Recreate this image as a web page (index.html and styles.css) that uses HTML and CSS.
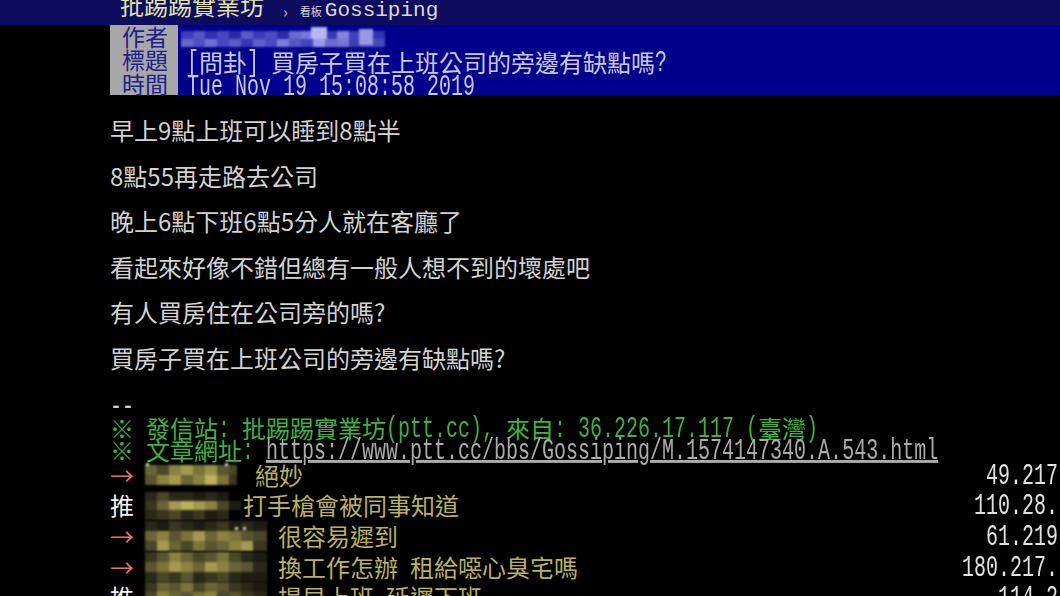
FILE: index.html
```html
<!DOCTYPE html>
<html lang="zh-Hant">
<head>
<meta charset="utf-8">
<title>[問卦] 買房子買在上班公司的旁邊有缺點嗎?</title>
<link rel="stylesheet" href="styles.css">
</head>
<body>
<header class="topbar">
  <span class="brand">批踢踢實業坊</span>
  <span class="crumb-sep">›</span>
  <span class="board-label">看板</span>
  <span class="board-name">Gossiping</span>
</header>

<section class="meta">
  <div class="meta-labels">
    <div class="meta-row">作者</div>
    <div class="meta-row">標題</div>
    <div class="meta-row">時間</div>
  </div>
  <div class="meta-values">
    <div class="meta-row">
      <svg class="author-mosaic" width="210" height="20" viewBox="0 0 210 20" aria-hidden="true">
        <rect x="0" y="4" width="12" height="8" fill="#3c3cbc"/><rect x="12" y="4" width="12" height="8" fill="#5454c4"/><rect x="24" y="4" width="12" height="8" fill="#3030b0"/><rect x="36" y="4" width="12" height="8" fill="#4848c0"/><rect x="48" y="4" width="12" height="8" fill="#2a2aa8"/><rect x="60" y="4" width="12" height="8" fill="#5a5ac8"/><rect x="72" y="4" width="12" height="8" fill="#3a3ab8"/><rect x="84" y="4" width="12" height="8" fill="#4c4cc0"/><rect x="96" y="4" width="12" height="8" fill="#2c2caa"/><rect x="108" y="4" width="12" height="8" fill="#6a6ad0"/><rect x="120" y="4" width="12" height="8" fill="#7878d8"/><rect x="132" y="4" width="12" height="8" fill="#a8a8ee"/><rect x="144" y="4" width="12" height="8" fill="#3a3ab4"/><rect x="156" y="4" width="12" height="8" fill="#8484dc"/><rect x="168" y="4" width="12" height="8" fill="#4040ba"/><rect x="180" y="4" width="12" height="8" fill="#6464cc"/><rect x="192" y="4" width="12" height="8" fill="#3434b0"/>
        <rect x="0" y="12" width="12" height="8" fill="#6868cc"/><rect x="12" y="12" width="12" height="8" fill="#5050c2"/><rect x="24" y="12" width="12" height="8" fill="#7070d4"/><rect x="36" y="12" width="12" height="8" fill="#4646be"/><rect x="48" y="12" width="12" height="8" fill="#5c5cc8"/><rect x="60" y="12" width="12" height="8" fill="#3636b4"/><rect x="72" y="12" width="12" height="8" fill="#6060ca"/><rect x="84" y="12" width="12" height="8" fill="#4a4ac0"/><rect x="96" y="12" width="12" height="8" fill="#7c7cd8"/><rect x="108" y="12" width="12" height="8" fill="#5656c6"/><rect x="120" y="12" width="12" height="8" fill="#4444bc"/><rect x="132" y="12" width="12" height="8" fill="#9a9ae6"/><rect x="144" y="12" width="12" height="8" fill="#6c6cd0"/><rect x="156" y="12" width="12" height="8" fill="#7676d6"/><rect x="168" y="12" width="12" height="8" fill="#3e3eb8"/><rect x="180" y="12" width="12" height="8" fill="#5252c4"/><rect x="192" y="12" width="12" height="8" fill="#4848bc"/>
        <rect x="130" y="0" width="16" height="12" fill="#b8b8f2"/><rect x="178" y="2" width="14" height="16" fill="#9898e0"/>
      </svg>
    </div>
    <div class="meta-row"><span class="m">[</span>問卦<span class="m">] </span>買房子買在上班公司的旁邊有缺點嗎<span class="m">?</span></div>
    <div class="meta-row"><span class="m">Tue Nov 19 15:08:58 2019</span></div>
  </div>
</section>

<main class="content">
  <p class="line">早上9點上班可以睡到8點半</p>
  <p class="line">8點55再走路去公司</p>
  <p class="line">晚上6點下班6點5分人就在客廳了</p>
  <p class="line">看起來好像不錯但總有一般人想不到的壞處吧</p>
  <p class="line">有人買房住在公司旁的嗎?</p>
  <p class="line">買房子買在上班公司的旁邊有缺點嗎?</p>
</main>

<section class="sig">
  <div class="sig-line"><span class="m">--</span></div>
  <div class="sig-line green">※<span class="m"> </span>發信站<span class="m">: </span>批踢踢實業坊<span class="m">(ptt.cc), </span>來自<span class="m">: 36.226.17.117 (</span>臺灣<span class="m">)</span></div>
  <div class="sig-line green">※<span class="m"> </span>文章網址<span class="m">: </span><span class="m url">https://www.ptt.cc/bbs/Gossiping/M.1574147340.A.543.html</span></div>
</section>

<section class="pushes">
  <div class="push">
    <span class="tag arrow">→</span>
    <span class="uid uid-a">
      <svg width="92" height="30" viewBox="0 0 92 30" aria-hidden="true">
        <rect x="0" y="5" width="12" height="10" fill="#6a6535"/><rect x="12" y="5" width="12" height="10" fill="#4a4628"/><rect x="24" y="5" width="12" height="10" fill="#8a8340"/><rect x="36" y="5" width="12" height="10" fill="#a39a50"/><rect x="48" y="5" width="12" height="10" fill="#7a7438"/><rect x="60" y="5" width="12" height="10" fill="#9a9248"/><rect x="72" y="5" width="12" height="10" fill="#5a5530"/><rect x="84" y="5" width="8" height="10" fill="#4a4628"/>
        <rect x="0" y="15" width="12" height="10" fill="#5a5530"/><rect x="12" y="15" width="12" height="10" fill="#8a8340"/><rect x="24" y="15" width="12" height="10" fill="#a39a50"/><rect x="36" y="15" width="12" height="10" fill="#6a6535"/><rect x="48" y="15" width="12" height="10" fill="#8a8340"/><rect x="60" y="15" width="12" height="10" fill="#bcb25c"/><rect x="72" y="15" width="12" height="10" fill="#7a7438"/><rect x="84" y="15" width="8" height="10" fill="#3a3620"/>
        <rect x="1" y="3" width="3" height="3" fill="#d8d8c8"/><rect x="80" y="3" width="3" height="3" fill="#d8d8c8"/>
      </svg>
    </span>
    <span class="push-text">絕妙</span>
    <span class="ip"><span class="m">49.217</span></span>
  </div>
  <div class="push">
    <span class="tag tui">推</span>
    <span class="uid uid-b">
      <svg width="96" height="30" viewBox="0 0 96 30" aria-hidden="true">
        <rect x="0" y="2" width="12" height="9" fill="#2a2818"/><rect x="12" y="2" width="12" height="9" fill="#4a4628"/><rect x="24" y="2" width="12" height="9" fill="#2a2818"/><rect x="36" y="2" width="12" height="9" fill="#2a2818"/><rect x="48" y="2" width="12" height="9" fill="#1e1c12"/><rect x="60" y="2" width="12" height="9" fill="#2a2818"/><rect x="72" y="2" width="12" height="9" fill="#1e1c12"/>
        <rect x="0" y="11" width="12" height="9" fill="#3a3620"/><rect x="12" y="11" width="12" height="9" fill="#6a6535"/><rect x="24" y="11" width="12" height="9" fill="#a39a50"/><rect x="36" y="11" width="12" height="9" fill="#bcb25c"/><rect x="48" y="11" width="12" height="9" fill="#a39a50"/><rect x="60" y="11" width="12" height="9" fill="#8a8340"/><rect x="72" y="11" width="12" height="9" fill="#4a4628"/><rect x="84" y="11" width="12" height="9" fill="#1e1c12"/>
        <rect x="0" y="20" width="12" height="10" fill="#2a2818"/><rect x="12" y="20" width="12" height="10" fill="#3a3620"/><rect x="24" y="20" width="12" height="10" fill="#4a4628"/><rect x="36" y="20" width="12" height="10" fill="#2a2818"/><rect x="48" y="20" width="12" height="10" fill="#3a3620"/><rect x="60" y="20" width="12" height="10" fill="#1e1c12"/><rect x="72" y="20" width="12" height="10" fill="#2a2818"/>
      </svg>
    </span>
    <span class="push-text">打手槍會被同事知道</span>
    <span class="ip"><span class="m">110.28.</span></span>
  </div>
  <div class="push">
    <span class="tag arrow">→</span>
    <span class="uid uid-c">
      <svg width="122" height="30" viewBox="0 0 122 30" aria-hidden="true">
        <rect x="0" y="0" width="12" height="10" fill="#2a2818"/><rect x="12" y="0" width="12" height="10" fill="#1e1c12"/><rect x="24" y="0" width="12" height="10" fill="#3a3620"/><rect x="36" y="0" width="12" height="10" fill="#2a2818"/><rect x="48" y="0" width="12" height="10" fill="#1e1c12"/><rect x="60" y="0" width="12" height="10" fill="#2a2818"/><rect x="72" y="0" width="12" height="10" fill="#3a3620"/><rect x="84" y="0" width="12" height="10" fill="#1e1c12"/><rect x="96" y="0" width="12" height="10" fill="#2a2818"/><rect x="108" y="0" width="14" height="10" fill="#1e1c12"/>
        <rect x="0" y="10" width="12" height="10" fill="#6a6535"/><rect x="12" y="10" width="12" height="10" fill="#8a8340"/><rect x="24" y="10" width="12" height="10" fill="#5a5530"/><rect x="36" y="10" width="12" height="10" fill="#7a7438"/><rect x="48" y="10" width="12" height="10" fill="#a39a50"/><rect x="60" y="10" width="12" height="10" fill="#6a6535"/><rect x="72" y="10" width="12" height="10" fill="#8a8340"/><rect x="84" y="10" width="12" height="10" fill="#7a7438"/><rect x="96" y="10" width="12" height="10" fill="#5a5530"/><rect x="108" y="10" width="14" height="10" fill="#4a4628"/>
        <rect x="0" y="20" width="12" height="10" fill="#4a4628"/><rect x="12" y="20" width="12" height="10" fill="#a39a50"/><rect x="24" y="20" width="12" height="10" fill="#6a6535"/><rect x="36" y="20" width="12" height="10" fill="#4a4628"/><rect x="48" y="20" width="12" height="10" fill="#7a7438"/><rect x="60" y="20" width="12" height="10" fill="#5a5530"/><rect x="72" y="20" width="12" height="10" fill="#6a6535"/><rect x="84" y="20" width="12" height="10" fill="#8a8340"/><rect x="96" y="20" width="12" height="10" fill="#a39a50"/><rect x="108" y="20" width="14" height="10" fill="#3a3620"/>
        <rect x="90" y="6" width="3" height="3" fill="#d8d8c8"/><rect x="98" y="6" width="3" height="3" fill="#d8d8c8"/>
      </svg>
    </span>
    <span class="push-text">很容易遲到</span>
    <span class="ip"><span class="m">61.219</span></span>
  </div>
  <div class="push">
    <span class="tag arrow">→</span>
    <span class="uid uid-c">
      <svg width="122" height="30" viewBox="0 0 122 30" aria-hidden="true">
        <rect x="0" y="0" width="12" height="10" fill="#3a3620"/><rect x="12" y="0" width="12" height="10" fill="#5a5530"/><rect x="24" y="0" width="12" height="10" fill="#8a8340"/><rect x="36" y="0" width="12" height="10" fill="#6a6535"/><rect x="48" y="0" width="12" height="10" fill="#4a4628"/><rect x="60" y="0" width="12" height="10" fill="#5a5530"/><rect x="72" y="0" width="12" height="10" fill="#7a7438"/><rect x="84" y="0" width="12" height="10" fill="#4a4628"/><rect x="96" y="0" width="12" height="10" fill="#2a2818"/><rect x="108" y="0" width="14" height="10" fill="#1e1c12"/>
        <rect x="0" y="10" width="12" height="10" fill="#5a5530"/><rect x="12" y="10" width="12" height="10" fill="#7a7438"/><rect x="24" y="10" width="12" height="10" fill="#a39a50"/><rect x="36" y="10" width="12" height="10" fill="#8a8340"/><rect x="48" y="10" width="12" height="10" fill="#6a6535"/><rect x="60" y="10" width="12" height="10" fill="#a39a50"/><rect x="72" y="10" width="12" height="10" fill="#8a8340"/><rect x="84" y="10" width="12" height="10" fill="#6a6535"/><rect x="96" y="10" width="12" height="10" fill="#5a5530"/><rect x="108" y="10" width="14" height="10" fill="#2a2818"/>
        <rect x="0" y="20" width="12" height="10" fill="#2a2818"/><rect x="12" y="20" width="12" height="10" fill="#4a4628"/><rect x="24" y="20" width="12" height="10" fill="#3a3620"/><rect x="36" y="20" width="12" height="10" fill="#5a5530"/><rect x="48" y="20" width="12" height="10" fill="#2a2818"/><rect x="60" y="20" width="12" height="10" fill="#3a3620"/><rect x="72" y="20" width="12" height="10" fill="#4a4628"/><rect x="84" y="20" width="12" height="10" fill="#2a2818"/><rect x="96" y="20" width="12" height="10" fill="#1e1c12"/><rect x="108" y="20" width="14" height="10" fill="#1e1c12"/>
      </svg>
    </span>
    <span class="push-text">換工作怎辦<span class="m"> </span>租給噁心臭宅嗎</span>
    <span class="ip"><span class="m">180.217.</span></span>
  </div>
  <div class="push">
    <span class="tag tui">推</span>
    <span class="uid uid-c">
      <svg width="122" height="30" viewBox="0 0 122 30" aria-hidden="true">
        <rect x="0" y="0" width="12" height="10" fill="#3a3620"/><rect x="12" y="0" width="12" height="10" fill="#6a6535"/><rect x="24" y="0" width="12" height="10" fill="#5a5530"/><rect x="36" y="0" width="12" height="10" fill="#7a7438"/><rect x="48" y="0" width="12" height="10" fill="#4a4628"/><rect x="60" y="0" width="12" height="10" fill="#6a6535"/><rect x="72" y="0" width="12" height="10" fill="#5a5530"/><rect x="84" y="0" width="12" height="10" fill="#3a3620"/><rect x="96" y="0" width="12" height="10" fill="#2a2818"/><rect x="108" y="0" width="14" height="10" fill="#1e1c12"/>
        <rect x="0" y="10" width="12" height="10" fill="#4a4628"/><rect x="12" y="10" width="12" height="10" fill="#8a8340"/><rect x="24" y="10" width="12" height="10" fill="#6a6535"/><rect x="36" y="10" width="12" height="10" fill="#5a5530"/><rect x="48" y="10" width="12" height="10" fill="#7a7438"/><rect x="60" y="10" width="12" height="10" fill="#8a8340"/><rect x="72" y="10" width="12" height="10" fill="#4a4628"/><rect x="84" y="10" width="12" height="10" fill="#5a5530"/><rect x="96" y="10" width="12" height="10" fill="#3a3620"/><rect x="108" y="10" width="14" height="10" fill="#2a2818"/>
      </svg>
    </span>
    <span class="push-text">提早上班<span class="m"> </span>延遲下班</span>
    <span class="ip"><span class="m">114.2</span></span>
  </div>
</section>
</body>
</html>
```

FILE: styles.css
```css
* {
  box-sizing: border-box;
}

html,
body {
  margin: 0;
  padding: 0;
  background: #000;
}

body {
  width: 1060px;
  height: 596px;
  overflow: hidden;
  font-family: "Noto Sans CJK TC", "Noto Sans CJK SC", sans-serif;
  color: #d2d2d2;
}

/* half-width terminal glyphs (tall monospace latin) */
.m {
  display: inline-block;
  font-family: "Liberation Mono", "DejaVu Sans Mono", monospace;
  font-size: 20px;
  line-height: 13px;
  white-space: pre;
  vertical-align: 1px;
  transform: scaleY(1.45);
  transform-origin: 50% 100%;
}

/* ---------- top bar ---------- */
.topbar {
  display: flex;
  align-items: flex-start;
  height: 25px;
  padding-left: 120px;
  background: #0e0c5e;
  overflow: hidden;
}

.brand {
  font-size: 24px;
  line-height: 24px;
  margin-top: -7px;
  color: #e2e2a4;
  white-space: nowrap;
}

.crumb-sep {
  font-size: 16px;
  line-height: 16px;
  margin: 3px 0 0 19px;
  color: #b8b8cc;
}

.board-label {
  font-size: 11px;
  line-height: 11px;
  margin: 6px 0 0 12px;
  color: #d6d6d6;
  white-space: nowrap;
}

.board-name {
  font-family: "Liberation Mono", "DejaVu Sans Mono", monospace;
  font-size: 21px;
  line-height: 21px;
  margin: 0 0 0 3px;
  color: #d8d8d8;
}

/* ---------- article header ---------- */
.meta {
  display: flex;
  height: 70px;
  padding-left: 110px;
}

.meta-labels {
  width: 68px;
  flex: none;
  padding-left: 12px;
  background: #a7a7a7;
  color: #20208e;
  font-size: 23px;
}

.meta-values {
  flex: 1;
  padding-left: 9px;
  background: #00008c;
  color: #c8c8e2;
  font-size: 24px;
}

.meta-row {
  height: 23.33px;
  line-height: 23.33px;
  white-space: nowrap;
}

.author-mosaic {
  display: block;
  margin: 2px 0 0 -6px;
  filter: blur(0.9px);
}

/* ---------- body ---------- */
.content {
  padding: 12px 0 0 110px;
}

.line {
  margin: 0;
  height: 45.6px;
  line-height: 45.6px;
  font-size: 24px;
  white-space: nowrap;
}

/* ---------- signature ---------- */
.sig {
  margin-top: 14px;
  padding-left: 110px;
  font-size: 24px;
}

.sig-line {
  height: 22.3px;
  line-height: 22.3px;
  white-space: nowrap;
}

.green {
  color: #3db33d;
}

.url {
  color: #ababab;
  text-decoration: underline;
}

/* ---------- pushes ---------- */
.pushes {
  margin-top: -2px;
  padding: 0 2px 0 110px;
  font-size: 24px;
}

.push {
  display: flex;
  align-items: center;
  height: 30.6px;
  white-space: nowrap;
}

.tag {
  width: 35px;
  flex: none;
  line-height: 24px;
}

.arrow {
  color: #de7272;
}

.tui {
  color: #f2f2f2;
}

.uid {
  display: block;
  flex: none;
  height: 30px;
}

.uid svg {
  display: block;
  filter: blur(1px);
}

.uid-a {
  width: 110px;
}

.uid-b {
  width: 98px;
}

.uid-c {
  width: 133px;
}

.push-text {
  line-height: 24px;
  color: #bab25a;
}

.ip {
  margin-left: auto;
  height: 24px;
  line-height: 24px;
  color: #e2e2e2;
}
```
